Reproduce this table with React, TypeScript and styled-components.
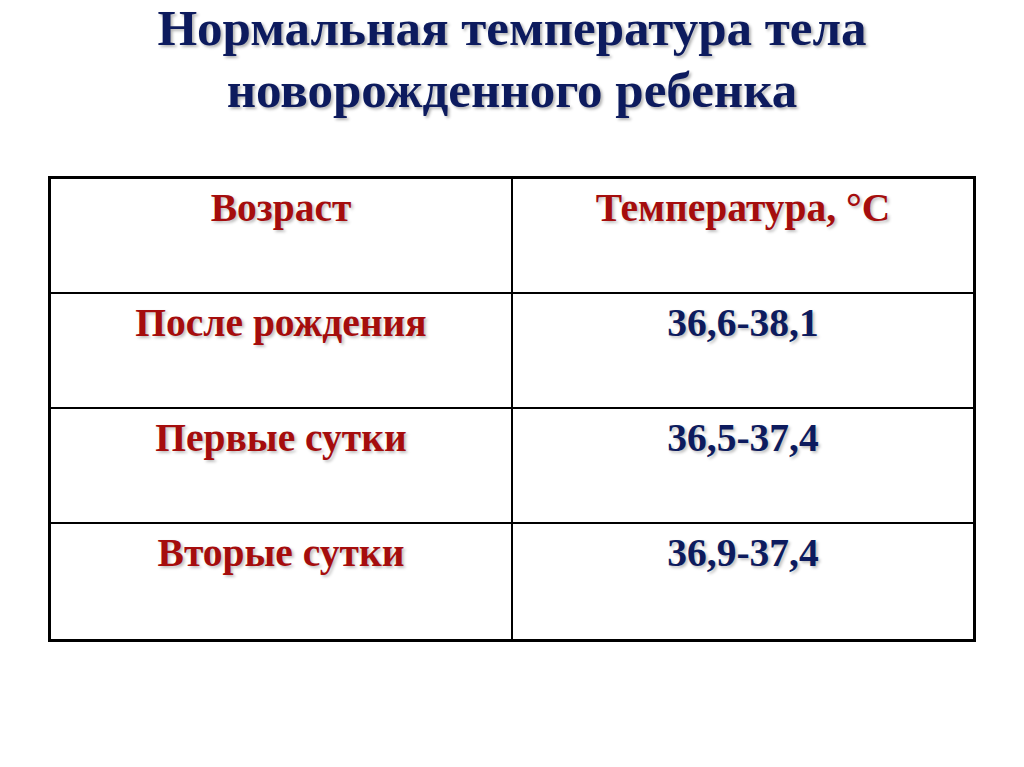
import React from "react";
import styled, { createGlobalStyle } from "styled-components";

const GlobalStyle = createGlobalStyle`
  html, body {
    margin: 0;
    padding: 0;
    background: #ffffff;
  }
  body {
    font-family: "Liberation Serif", "Times New Roman", serif;
  }
`;

const Slide = styled.div`
  width: 1024px;
  height: 767px;
  box-sizing: border-box;
  padding: 0 48px;
  display: flex;
  flex-direction: column;
  align-items: center;
`;

const Title = styled.h1`
  margin: -3px 0 0 0;
  font-size: 51px;
  line-height: 62px;
  font-weight: bold;
  color: #0d1b5e;
  text-align: center;
  white-space: nowrap;
  text-shadow: 2px 2px 3px rgba(0, 0, 0, 0.3);
`;

const Table = styled.div`
  margin-top: 55px;
  width: 928px;
  box-sizing: border-box;
  border: 3px solid #000;
  display: grid;
  grid-template-columns: 460px 1fr;
`;

const Cell = styled.div<{ $last?: boolean; $right?: boolean }>`
  height: 115px;
  box-sizing: border-box;
  border-bottom: ${(p) => (p.$last ? "none" : "2px solid #000")};
  border-left: ${(p) => (p.$right ? "2px solid #000" : "none")};
  padding-top: 6px;
  text-align: center;
  font-size: 39.5px;
  line-height: 46px;
  font-weight: bold;
  white-space: nowrap;
  text-shadow: 2px 2px 3px rgba(0, 0, 0, 0.25);
`;

const Label = styled.span`
  color: #a50d0d;
`;

const Value = styled.span`
  color: #0d1b5e;
`;

const rows = [
  { age: "После рождения", temp: "36,6-38,1" },
  { age: "Первые сутки", temp: "36,5-37,4" },
  { age: "Вторые сутки", temp: "36,9-37,4" },
];

export default function App() {
  return (
    <>
      <GlobalStyle />
      <Slide>
        <Title>
          Нормальная температура тела
          <br />
          новорожденного ребенка
        </Title>
        <Table>
          <Cell>
            <Label>Возраст</Label>
          </Cell>
          <Cell $right>
            <Label>Температура, °С</Label>
          </Cell>
          {rows.map((r, i) => (
            <React.Fragment key={r.age}>
              <Cell $last={i === rows.length - 1}>
                <Label>{r.age}</Label>
              </Cell>
              <Cell $right $last={i === rows.length - 1}>
                <Value>{r.temp}</Value>
              </Cell>
            </React.Fragment>
          ))}
        </Table>
      </Slide>
    </>
  );
}
